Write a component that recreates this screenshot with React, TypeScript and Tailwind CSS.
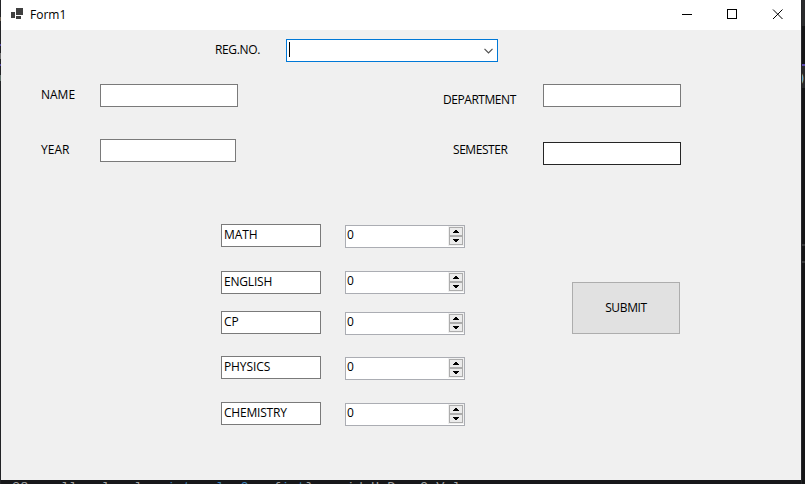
import React from "react";

const subjects = [
  { name: "MATH", row: "", spin: "mt-px", tracking: "tracking-[-0.1px]" },
  { name: "ENGLISH", row: "mt-[23px]", spin: "", tracking: "tracking-[-0.2px]" },
  { name: "CP", row: "mt-[16px]", spin: "mt-px", tracking: "tracking-[-0.1px]" },
  { name: "PHYSICS", row: "mt-[21px]", spin: "mt-px", tracking: "tracking-[-0.1px]" },
  { name: "CHEMISTRY", row: "mt-[22px]", spin: "mt-px", tracking: "tracking-[-0.2px]" },
];

function TextBox({ className = "", children }: { className?: string; children?: React.ReactNode }) {
  return (
    <div className={`h-[23px] shrink-0 border bg-white pl-[2px] leading-[20px] ${className}`}>{children}</div>
  );
}

function Arrow({ up }: { up?: boolean }) {
  return (
    <div className="flex h-[9px] w-[14px] items-center justify-center border border-[#acacac] bg-[#ebebeb]">
      <svg width="6" height="3" viewBox="0 0 6 3" shapeRendering="crispEdges">
        <path d={up ? "M2 0h2v1h1v1h1v1H0V2h1V1h1z" : "M0 0h6v1H5v1H4v1H2V2H1V1H0z"} />
      </svg>
    </div>
  );
}

function Spinner({ className = "" }: { className?: string }) {
  return (
    <div className={`ml-6 flex h-[23px] w-[120px] justify-between border border-[#abadb3] bg-white pl-px ${className}`}>
      <span className="leading-[18px]">0</span>
      <div className="flex h-5 w-4 flex-col bg-[#f0f0f0] pt-px pl-px">
        <Arrow up />
        <Arrow />
      </div>
    </div>
  );
}

function TitleBar() {
  return (
    <div className="flex h-[30px] items-center bg-white">
      <svg className="mb-[2px] ml-[10px]" width="12" height="12" viewBox="0 0 12 12" shapeRendering="crispEdges" fill="#404040">
        <path d="M5 0h7v7H5zM0 4h4v6H0zM5 8h5v3H5z" />
      </svg>
      <span className="ml-[7px] leading-[18px]">Form1</span>
      <svg className="ml-auto" width="138" height="30" fill="none" stroke="#000" shapeRendering="crispEdges">
        <path d="M19 14.5h10" />
        <path d="M64.500 9.500h9v9h-9z" />
        <path d="M110 9.500l9.500 9.500M119.500 9.500l-9.500 9.500" shapeRendering="auto" />
      </svg>
    </div>
  );
}

export default function App() {
  return (
    <div className="relative h-[484px] w-[805px] overflow-hidden bg-[#17181a] pl-px font-['Open_Sans','Noto_Sans',sans-serif] text-[12px] text-black">
      <div className="h-[480px] w-[800px] bg-[#f0f0f0]">
        <TitleBar />
        <div className="flex h-[54px] items-start pt-[9px]">
          <span className="ml-[214px] w-[71px] leading-[22px] tracking-[-0.35px]">REG.NO.</span>
          <div className="flex h-[23px] w-[212px] items-center justify-between border border-[#0078d7] bg-white pr-1 pl-[2px]">
            <div className="-mt-[3px] h-[15px] w-px bg-black" />
            <svg width="9" height="6" viewBox="0 0 9 6" fill="none" stroke="#505050" strokeWidth="1.2">
              <path d="M.5 .8l4 4 4-4" />
            </svg>
          </div>
        </div>
        <div className="flex h-[55px] items-start">
          <span className="ml-10 w-[59px] leading-[22px]">NAME</span>
          <TextBox className="w-[138px] border-[#7a7a7a]" />
          <span className="mt-[5px] ml-[205px] w-[100px] leading-[22px] tracking-[-0.45px]">DEPARTMENT</span>
          <TextBox className="w-[138px] border-[#7a7a7a]" />
        </div>
        <div className="flex h-[85px] items-start">
          <span className="ml-10 w-[59px] leading-[22px]">YEAR</span>
          <TextBox className="w-[136px] border-[#7a7a7a]" />
          <span className="ml-[217px] w-[90px] leading-[22px] tracking-[-0.45px]">SEMESTER</span>
          <TextBox className="mt-[3px] w-[138px] border-[#252525]" />
        </div>
        <div className="flex items-start pl-[220px]">
          <div className="flex w-[351px] flex-col">
            {subjects.map((s) => (
              <div key={s.name} className={`flex h-6 items-start ${s.row}`}>
                <TextBox className={`w-[100px] border-[#7a7a7a] ${s.tracking}`}>{s.name}</TextBox>
                <Spinner className={s.spin} />
              </div>
            ))}
          </div>
          <button className="mt-[58px] h-[52px] w-[108px] border border-[#adadad] bg-[#e1e1e1] tracking-[-0.35px]">
            SUBMIT
          </button>
        </div>
      </div>
      <div className="h-1 overflow-hidden whitespace-pre font-['Liberation_Mono',monospace] text-[13.6px] leading-[16px] text-[#a0a0a0]">
        <span className="ml-[11px]">{"38    ll   l   l   "}</span>
        <span className="text-[#3d80b5]">{"int   l  0   "}</span>
        <span>{"{"}</span>
        <span className="text-[#3d80b5]">int</span>
        <span>{"}    id H D   O Val"}</span>
      </div>
      <div className="absolute top-0 right-0 h-[484px] w-1 overflow-hidden border-l border-[#242528] bg-[#141516] text-[13px] text-[#8ec5e8]">
        <div className="h-[26px] bg-[#2a2b2d]" />
        <div className="h-10 border-b-2 border-[#5a48b0]" />
        <div className="h-[22px] bg-[#292a2c] pt-1 leading-[15px]">
          <div className="-ml-[2px]">)</div>
        </div>
        <div className="mt-[156px] h-[2px] bg-[#37383a]" />
        <div className="mt-[15px] h-[2px] bg-[#37383a]" />
      </div>
      <div className="absolute top-0 left-0 h-[484px] w-px bg-[#222326]">
        <div className="h-[17px]" />
        <div className="h-1 bg-[#6e6254]" />
        <div className="mt-[23px] h-[2px] bg-[#5147a0]" />
        <div className="mt-[7px] h-[6px] bg-[#6f6f6f]" />
        <div className="mt-[5px] h-[2px] bg-[#5147a0]" />
        <div className="mt-[9px] h-[6px] bg-[#60716c]" />
      </div>
    </div>
  );
}
